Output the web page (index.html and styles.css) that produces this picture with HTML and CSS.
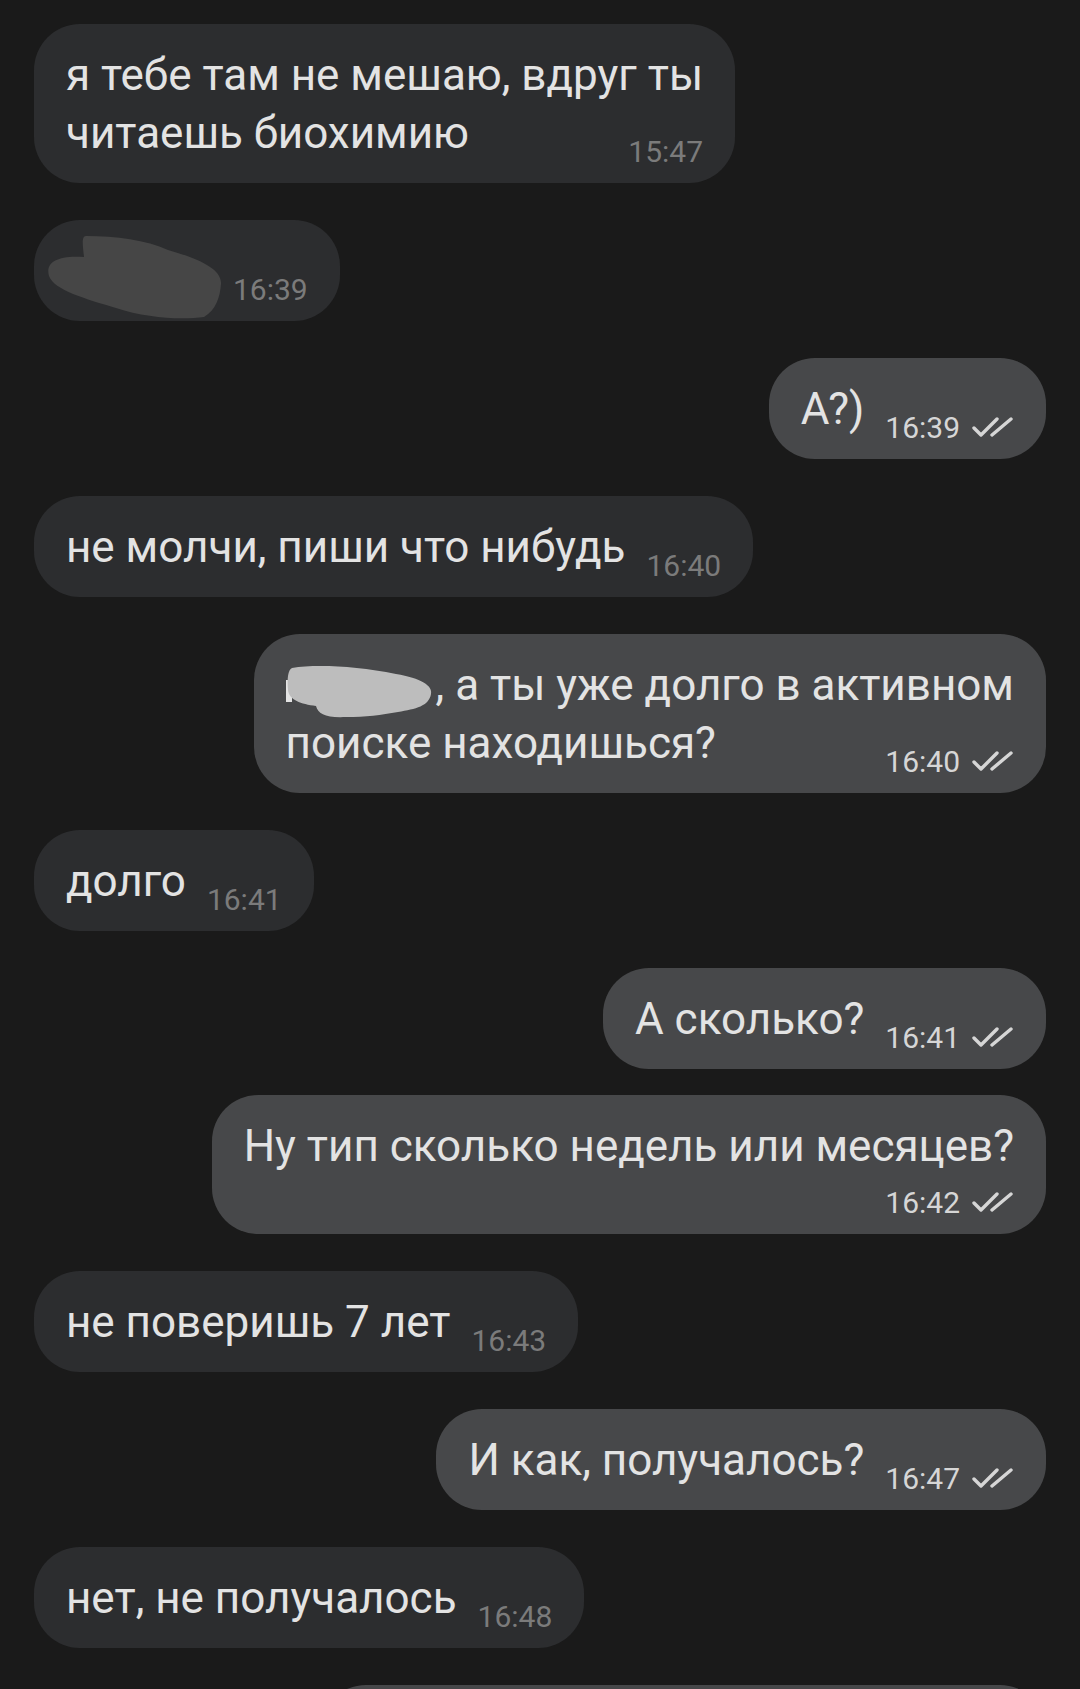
FILE: index.html
```html
<!DOCTYPE html>
<html lang="ru">
<head>
    <meta charset="UTF-8">
    <meta name="viewport" content="width=device-width, initial-scale=1.0">
    <title>Чат</title>
    <link rel="stylesheet" href="styles.css">
</head>
<body>
    <div class="chat">
        <div class="row in">
            <div class="bubble">я тебе там не мешаю, вдруг ты<br>читаешь биохимию<span class="meta">15:47</span></div>
        </div>
        <div class="row in">
            <div class="bubble"><svg class="smudge" viewBox="0 0 146 58" width="146" height="58"><path d="M20,-6 C50,-6 80,-2 102,8 C130,16 156,26 155,42 C154,55 150,68 138,75 C115,78 80,76 50,66 C20,57 -12,48 -17,34 C-21,20 -8,13 18,15 C17,5 15,-6 20,-6 Z"/></svg><span class="meta">16:39</span></div>
        </div>
        <div class="row out">
            <div class="bubble">А?)<span class="meta">16:39<svg class="ticks" viewBox="0 0 42 22"><path d="M2 12 L9 19 L25 3 M20 19 L39 3"/></svg></span></div>
        </div>
        <div class="row in">
            <div class="bubble">не молчи, пиши что нибудь<span class="meta">16:40</span></div>
        </div>
        <div class="row out">
            <div class="bubble"><svg class="smudge name" viewBox="0 0 150 58" width="150" height="58"><rect x="0" y="24" width="6" height="22" class="letter"/><path d="M6,12 C30,8 70,10 110,18 C135,22 147,30 145,38 C143,50 130,53 112,56 C95,59 80,61 60,61 C40,62 32,58 30,50 C15,48 3,44 2,34 C1,22 2,14 6,12 Z"/></svg>, а ты уже долго в активном<br>поиске находишься?<span class="meta">16:40<svg class="ticks" viewBox="0 0 42 22"><path d="M2 12 L9 19 L25 3 M20 19 L39 3"/></svg></span></div>
        </div>
        <div class="row in">
            <div class="bubble">долго<span class="meta">16:41</span></div>
        </div>
        <div class="row out">
            <div class="bubble">А сколько?<span class="meta">16:41<svg class="ticks" viewBox="0 0 42 22"><path d="M2 12 L9 19 L25 3 M20 19 L39 3"/></svg></span></div>
        </div>
        <div class="row out cont">
            <div class="bubble">Ну тип сколько недель или месяцев?<span class="meta meta-block">16:42<svg class="ticks" viewBox="0 0 42 22"><path d="M2 12 L9 19 L25 3 M20 19 L39 3"/></svg></span></div>
        </div>
        <div class="row in">
            <div class="bubble">не поверишь 7 лет<span class="meta">16:43</span></div>
        </div>
        <div class="row out">
            <div class="bubble">И как, получалось?<span class="meta">16:47<svg class="ticks" viewBox="0 0 42 22"><path d="M2 12 L9 19 L25 3 M20 19 L39 3"/></svg></span></div>
        </div>
        <div class="row in">
            <div class="bubble">нет, не получалось<span class="meta">16:48</span></div>
        </div>
        <div class="row out">
            <div class="bubble bubble-cut"></div>
        </div>
    </div>
</body>
</html>
```

FILE: styles.css
```css
body {
    margin: 0;
    background-color: #1a1a1a;
    color: #e3e3e3;
    font-family: Roboto, "Noto Sans", sans-serif;
    overflow: hidden;
}
.chat {
    padding: 24px 34px 0;
}
.row {
    display: flex;
    margin-top: 37px;
}
.row:first-child {
    margin-top: 0;
}
.row.out {
    justify-content: flex-end;
}
.row.cont {
    margin-top: 26px;
}
.bubble {
    max-width: 880px;
    padding: 22px 32px 16px 32px;
    border-radius: 46px;
    background-color: #2c2d2f;
    font-size: 44px;
    line-height: 58px;
}
.out .bubble {
    background-color: #47484a;
}
.meta {
    float: right;
    margin: 33px 0 0 21px;
    font-size: 30px;
    line-height: 30px;
    color: #7b7b7b;
}
.out .meta {
    color: #d6d6d6;
}
.meta-block {
    float: none;
    display: block;
    text-align: right;
    margin: 13px 0 0;
}
.ticks {
    width: 42px;
    height: 22px;
    margin-left: 12px;
    fill: none;
    stroke: currentColor;
    stroke-width: 3.4;
    stroke-linecap: round;
    stroke-linejoin: round;
}
.smudge {
    vertical-align: top;
    overflow: visible;
    fill: #464646;
}
.smudge.name {
    fill: #bdbdbd;
}
.smudge .letter {
    fill: #e3e3e3;
}
.bubble-cut {
    width: 662px;
    height: 62px;
}
```
